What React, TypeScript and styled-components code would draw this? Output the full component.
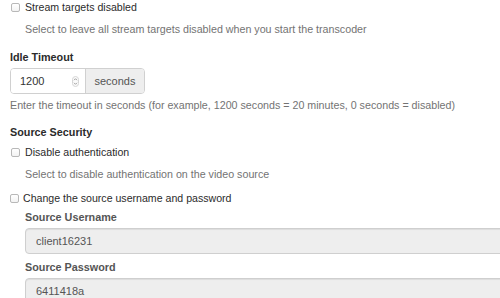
import React from "react"
import styled, { createGlobalStyle } from "styled-components"

const GlobalStyle = createGlobalStyle`
  html, body {
    margin: 0;
    padding: 0;
    background: #fff;
    overflow: hidden;
  }
  body {
    font-family: "Liberation Sans", Arial, sans-serif;
    font-size: 10.7px;
    color: #333;
  }
`

const Page = styled.div`
  display: flex;
  flex-direction: column;
  padding-left: 10px;
  width: 490px;
  overflow: hidden;
`

const CheckRow = styled.label<{ $top?: number; $tight?: boolean }>`
  display: flex;
  align-items: center;
  gap: ${({ $tight }) => ($tight ? 4 : 5)}px;
  height: 14px;
  line-height: 14px;
  margin-top: ${({ $top }) => $top ?? 0}px;
  padding-left: ${({ $tight }) => ($tight ? 0 : 1)}px;
  color: #2b2b2b;
  font-size: 10.6px;
`

const Box = styled.input.attrs({ type: "checkbox" })`
  appearance: none;
  margin: 0;
  width: 9px;
  height: 9px;
  border: 1px solid #b8b8b8;
  border-radius: 2px;
  background: linear-gradient(#fff, #f3f3f3);
  flex-shrink: 0;
`

const Help = styled.div<{ $top: number; $indent?: boolean }>`
  margin-top: ${({ $top }) => $top}px;
  padding-left: ${({ $indent }) => ($indent ? 15 : 0)}px;
  height: 14px;
  line-height: 14px;
  color: #737373;
  white-space: nowrap;
`

const Heading = styled.div<{ $top: number }>`
  margin-top: ${({ $top }) => $top}px;
  height: 14px;
  line-height: 14px;
  font-weight: bold;
  font-size: 10.8px;
  color: #2b2b2b;
`

const Group = styled.div`
  display: flex;
  width: 135px;
  height: 26px;
  margin-top: 4px;
  border: 1px solid #d0d0d0;
  border-radius: 4px;
  box-sizing: border-box;
  overflow: hidden;
`

const NumberField = styled.div`
  display: flex;
  align-items: center;
  width: 75px;
  padding: 0 6px 0 9px;
  box-sizing: border-box;
  background: #fff;
  border-right: 1px solid #d0d0d0;
`

const NumberInput = styled.input`
  flex: 1;
  width: 0;
  border: none;
  outline: none;
  padding: 0;
  font: inherit;
  font-size: 11px;
  color: #333;
  background: transparent;
`

const Addon = styled.div`
  flex: 1;
  display: flex;
  align-items: center;
  justify-content: center;
  background: #eee;
  color: #555;
  font-size: 11px;
`

const Indented = styled.div`
  display: flex;
  flex-direction: column;
  padding-left: 15px;
`

const SubLabel = styled.div<{ $top: number }>`
  margin-top: ${({ $top }) => $top}px;
  height: 14px;
  line-height: 14px;
  font-weight: bold;
  font-size: 10.8px;
  color: #555;
`

const DisabledInput = styled.input`
  margin-top: 4px;
  height: 26px;
  box-sizing: border-box;
  width: 520px;
  padding: 0 10px;
  border: 1px solid #cfcfcf;
  border-radius: 4px;
  background: #eee;
  box-shadow: inset 0 1px 1px rgba(0, 0, 0, 0.075);
  font: inherit;
  font-size: 11px;
  color: #555;
  outline: none;
`

function Spinner() {
  return (
    <svg width="7" height="11" viewBox="0 0 7 11">
      <rect x="0.5" y="0.5" width="6" height="10" rx="3" fill="#fafafa" stroke="#d6d6d6" />
      <path d="M2 4.2 L3.5 2.7 L5 4.2" fill="none" stroke="#888" strokeWidth="0.8" />
      <path d="M2 6.8 L3.5 8.3 L5 6.8" fill="none" stroke="#888" strokeWidth="0.8" />
    </svg>
  )
}

export default function App() {
  return (
    <>
      <GlobalStyle />
      <Page>
        <CheckRow>
          <Box />
          Stream targets disabled
        </CheckRow>
        <Help $top={8} $indent>
          Select to leave all stream targets disabled when you start the transcoder
        </Help>

        <Heading $top={14}>Idle Timeout</Heading>
        <Group>
          <NumberField>
            <NumberInput defaultValue="1200" />
            <Spinner />
          </NumberField>
          <Addon>seconds</Addon>
        </Group>
        <Help $top={4}>
          Enter the timeout in seconds (for example, 1200 seconds = 20 minutes, 0 seconds = disabled)
        </Help>

        <Heading $top={13}>Source Security</Heading>
        <CheckRow $top={6}>
          <Box />
          Disable authentication
        </CheckRow>
        <Help $top={8} $indent>
          Select to disable authentication on the video source
        </Help>
        <CheckRow $top={10} $tight>
          <Box />
          Change the source username and password
        </CheckRow>

        <Indented>
          <SubLabel $top={5}>Source Username</SubLabel>
          <DisabledInput disabled defaultValue="client16231" />
          <SubLabel $top={6}>Source Password</SubLabel>
          <DisabledInput disabled defaultValue="6411418a" />
        </Indented>
      </Page>
    </>
  )
}
